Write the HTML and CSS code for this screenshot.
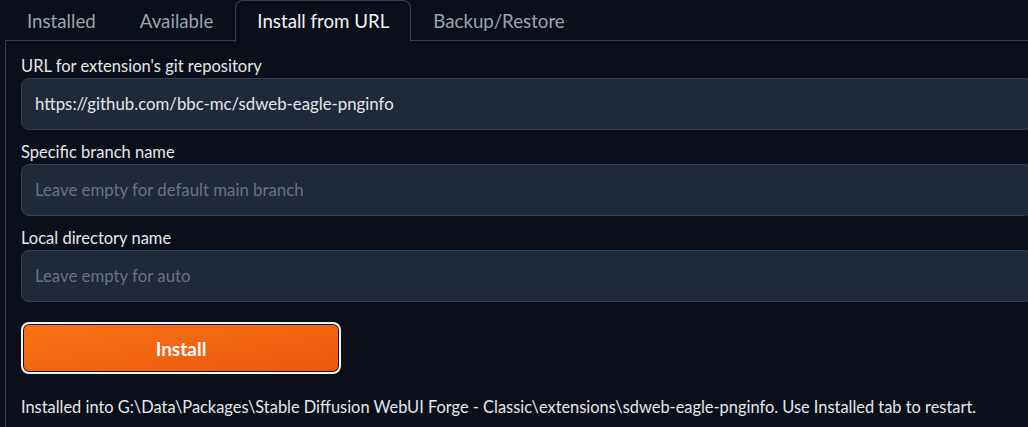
FILE: index.html
```html
<!DOCTYPE html>
<html>
<head>
<meta charset="utf-8">
<link rel="stylesheet" href="styles.css">
</head>
<body>
<div class="tabs">
  <div class="tab">Installed</div>
  <div class="tab">Available</div>
  <div class="tab selected">Install from URL</div>
  <div class="tab">Backup/Restore</div>
</div>
<div class="panel">
  <div class="field">
    <div class="label">URL for extension's git repository</div>
    <div class="input">https://github.com/bbc-mc/sdweb-eagle-pnginfo</div>
  </div>
  <div class="field">
    <div class="label">Specific branch name</div>
    <div class="input placeholder">Leave empty for default main branch</div>
  </div>
  <div class="field">
    <div class="label">Local directory name</div>
    <div class="input placeholder">Leave empty for auto</div>
  </div>
  <div class="button">Install</div>
  <div class="status">Installed into G:\Data\Packages\Stable Diffusion WebUI Forge - Classic\extensions\sdweb-eagle-pnginfo. Use Installed tab to restart.</div>
</div>
</body>
</html>
```
FILE: styles.css
```css
html, body {
  margin: 0;
  padding: 0;
  background: #0b0f19;
  overflow: hidden;
  font-family: "Lato", "Noto Sans", sans-serif;
  color: #e5e7eb;
}
.tabs {
  display: flex;
  padding-left: 5px;
  height: 41px;
  position: relative;
  z-index: 1;
}
.tab {
  padding: 0 21px;
  height: 41px;
  line-height: 40px;
  font-size: 18.7px;
  color: #9ca3af;
  box-sizing: border-box;
  border: 1px solid transparent;
  border-bottom: none;
  border-radius: 8px 8px 0 0;
}
.tab.selected {
  color: #f3f4f6;
  border-color: #374151;
  background: #0b0f19;
  height: 42px;
}
.panel {
  border: 1px solid #374151;
  margin: -1px -20px 0 5px;
  padding: 15px 15px 20px 15px;
  border-radius: 0 0 8px 8px;
}
.field {
  margin-bottom: 12px;
}
.label {
  font-size: 16.5px;
  line-height: 20px;
  margin-bottom: 2px;
  color: #e5e7eb;
}
.input {
  height: 52px;
  box-sizing: border-box;
  background: #1f2937;
  border: 1px solid #374151;
  border-radius: 8px;
  padding: 0 13px 1px;
  display: flex;
  align-items: center;
  font-size: 16.8px;
  color: #e5e7eb;
}
.input.placeholder {
  color: #6b7280;
}
.button {
  margin-top: 20px;
  width: 320px;
  height: 52px;
  box-sizing: border-box;
  border: 2px solid #f3f4f6;
  border-radius: 8px;
  background: linear-gradient(to bottom right, #f97316, #ea580c);
  box-shadow: inset 0 0 0 1px #1a1208;
  display: flex;
  align-items: center;
  justify-content: center;
  font-weight: bold;
  font-size: 19px;
  color: #fff;
}
.status {
  margin-top: 23px;
  font-size: 16.4px;
  line-height: 20px;
  color: #e5e7eb;
}
```
